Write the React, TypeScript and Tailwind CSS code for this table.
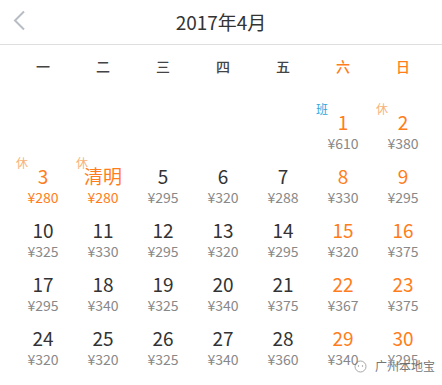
type Day = {
  d: string;
  price: string;
  tone?: "weekend" | "holiday";
  tag?: "休" | "班";
};

const weekdays = ["一", "二", "三", "四", "五", "六", "日"];

const rows: (Day | null)[][] = [
  [null, null, null, null, null, { d: "1", price: "¥610", tone: "weekend", tag: "班" }, { d: "2", price: "¥380", tone: "weekend", tag: "休" }],
  [
    { d: "3", price: "¥280", tone: "holiday", tag: "休" },
    { d: "清明", price: "¥280", tone: "holiday", tag: "休" },
    { d: "5", price: "¥295" },
    { d: "6", price: "¥320" },
    { d: "7", price: "¥288" },
    { d: "8", price: "¥330", tone: "weekend" },
    { d: "9", price: "¥295", tone: "weekend" },
  ],
  [
    { d: "10", price: "¥325" },
    { d: "11", price: "¥330" },
    { d: "12", price: "¥295" },
    { d: "13", price: "¥320" },
    { d: "14", price: "¥295" },
    { d: "15", price: "¥320", tone: "weekend" },
    { d: "16", price: "¥375", tone: "weekend" },
  ],
  [
    { d: "17", price: "¥295" },
    { d: "18", price: "¥340" },
    { d: "19", price: "¥325" },
    { d: "20", price: "¥340" },
    { d: "21", price: "¥375" },
    { d: "22", price: "¥367", tone: "weekend" },
    { d: "23", price: "¥375", tone: "weekend" },
  ],
  [
    { d: "24", price: "¥320" },
    { d: "25", price: "¥320" },
    { d: "26", price: "¥325" },
    { d: "27", price: "¥340" },
    { d: "28", price: "¥360" },
    { d: "29", price: "¥340", tone: "weekend" },
    { d: "30", price: "¥295", tone: "weekend" },
  ],
];

function DayCell({ day }: { day: Day | null }) {
  if (!day) return <div className="h-[54px]" />;
  const dateColor = day.tone ? "text-[#ff7d1a]" : "text-[#333]";
  const priceColor = day.tone === "holiday" ? "text-[#ff7d1a]" : "text-[#888]";
  return (
    <div className="relative h-[54px] flex flex-col items-center">
      {day.tag && (
        <span
          className={`absolute left-[3px] top-[-9px] text-[12px] leading-[14px] ${
            day.tag === "班" ? "text-[#2aa9de]" : "text-[#f7b27a]"
          }`}
        >
          {day.tag}
        </span>
      )}
      <span className={`text-[19px] leading-[22px] ${dateColor}`}>{day.d}</span>
      <span className={`text-[14px] leading-[20px] ${priceColor}`}>{day.price}</span>
    </div>
  );
}

export default function App() {
  return (
    <div
      className="relative w-[442px] h-[385px] overflow-hidden bg-white"
      style={{ fontFamily: '"Noto Sans CJK SC", "Noto Sans", sans-serif' }}
    >
      <header className="relative h-[45px] flex items-center justify-center border-b border-[#dedede]">
        <svg className="absolute left-[12px] top-[10px]" width="14" height="21" viewBox="0 0 14 21">
          <path d="M12 1.5 L3 10.5 L12 19.5" fill="none" stroke="#b8bcc4" strokeWidth="2" />
        </svg>
        <h1 className="text-[19px] leading-[24px] text-[#333] font-normal">2017年4月</h1>
      </header>

      <div className="grid grid-cols-[repeat(7,60px)] pl-[13px] h-[42px] items-center">
        {weekdays.map((w, i) => (
          <span
            key={w}
            className={`text-center text-[14px] font-medium ${i >= 5 ? "text-[#ff7d1a]" : "text-[#444]"}`}
          >
            {w}
          </span>
        ))}
      </div>

      <div className="grid grid-cols-[repeat(7,60px)] pl-[13px] pt-[24px]">
        {rows.map((r, ri) => r.map((day, ci) => <DayCell key={`${ri}-${ci}`} day={day} />))}
      </div>

      <div className="absolute left-[354px] top-[359px] flex items-center gap-[8px] opacity-80">
        <svg width="13" height="13" viewBox="0 0 13 13">
          <circle cx="6.5" cy="6.5" r="5.5" fill="none" stroke="#777" strokeWidth="0.8" />
          <circle cx="4.5" cy="6" r="0.7" fill="#777" />
          <circle cx="8.5" cy="6" r="0.7" fill="#777" />
        </svg>
        <span
          className="text-[12px] leading-[14px] text-[#555]"
          style={{ textShadow: "0 0 2px #fff, 0 0 2px #fff" }}
        >
          广州本地宝
        </span>
      </div>
    </div>
  );
}
